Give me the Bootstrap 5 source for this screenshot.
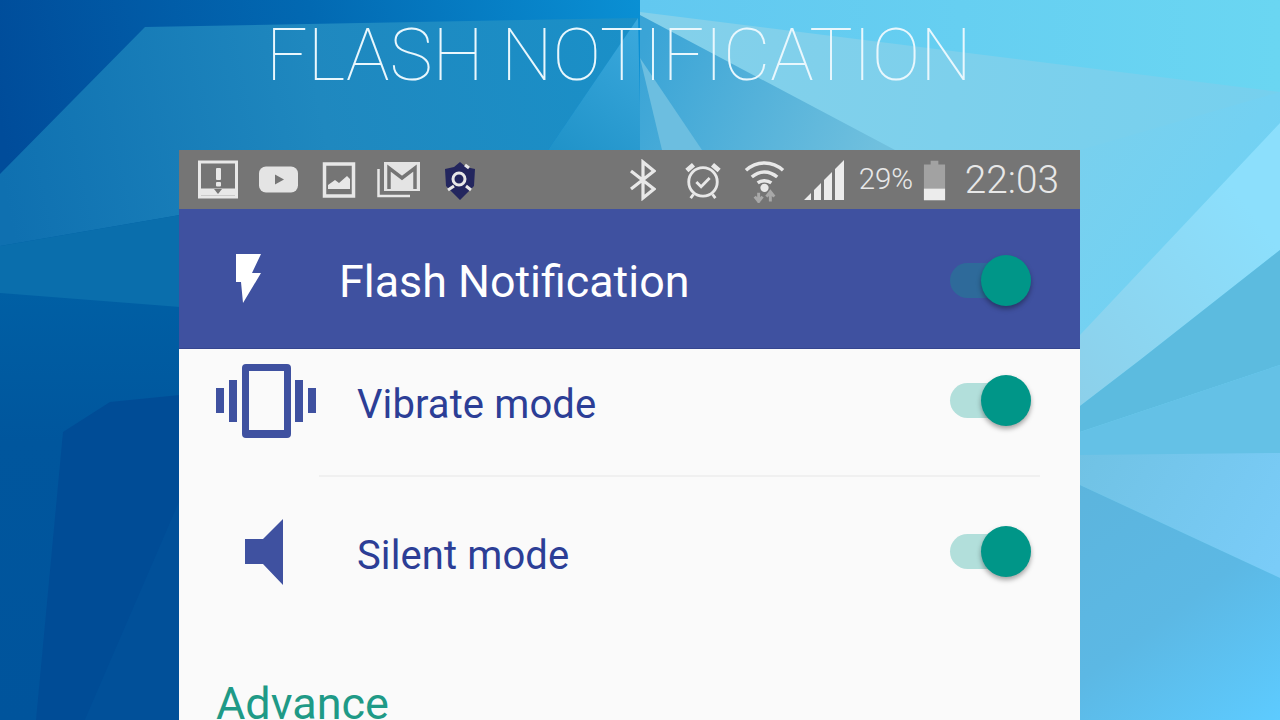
<!DOCTYPE html>
<html lang="en"><head><meta charset="utf-8"><title>Flash Notification</title>
<link href="https://cdn.jsdelivr.net/npm/bootstrap@5.3.0/dist/css/bootstrap.min.css" rel="stylesheet">
<style>
html,body{height:720px;overflow:hidden;background:#0a6fb0}
.stage{width:1280px;height:720px;overflow:hidden;font-family:Roboto,"Liberation Sans",sans-serif}
.wall{inset:0;z-index:0}
.front{z-index:1;height:720px}
.promo{margin:0;padding-left:266px;height:150px;padding-top:11px;font-size:72.8px;line-height:88px;font-weight:100;color:#e9f7fd;white-space:nowrap}
.phone{margin-left:179px;width:901px;height:570px;background:#fafafa;overflow:hidden}
.sbar{height:59px;background:#757575;color:#e8e8e8;padding-left:19px;padding-right:21px}
.apphead{height:140px;background:#3f51a0;color:#fff;padding-right:49px;box-shadow:inset 0 -1px 0 #35458f}
.headglyph{width:160px;padding-left:57px;height:50px;margin-top:-1px}
.headtitle{font-size:44.8px;font-weight:400;line-height:1;margin:6px 0 0}
.rowa{height:126px;padding:14px 49px 37px 36px}
.rowb{height:149px;padding:0 49px 0 36px}
.leadglyph{width:142px;flex:none}
.spk{padding-left:30px}
.rowlabel{font-size:40px;line-height:1;letter-spacing:.1px;color:#2c3e96;margin-top:8px}
.sep{height:2px;background:#f0f0f0;margin-left:140px;margin-right:40px}
.advance{font-size:45px;line-height:1;color:#1f9a87;padding-left:37px;padding-top:55px}
.tog{width:81px;height:51px;flex:none}
.tog-up{margin-top:3px}
.tog-track{left:0;top:8px;width:62px;height:35px;border-radius:18px;background:#b2dfdb}
.tog-track.dim{background:#2e6a9a}
.tog-thumb{right:0;top:0;width:50px;height:51px;border-radius:50%;background:#009688;box-shadow:0 3px 5px rgba(0,0,0,.35)}
.pct{font-size:29.500px;font-weight:300;line-height:1;margin-left:14px;letter-spacing:-.2px}
.clock{font-size:38.800px;font-weight:300;line-height:1;margin-left:18px;margin-top:2px}
.m-alarm{margin-left:28px}.m-wifi{margin-left:22px}.m-sig{margin-left:19px}.m-batt{margin-left:9px}
svg{display:block}
</style></head>
<body class="m-0">
<div class="stage position-relative">
<svg class="wall position-absolute" width="1280" height="720" viewBox="0 0 1280 720" aria-hidden="true">
<defs>
<linearGradient id="g0" x1="0" y1="293" x2="0" y2="720" gradientUnits="userSpaceOnUse"><stop offset="0" stop-color="#005fa4"/><stop offset=".35" stop-color="#00569d"/><stop offset="1" stop-color="#00549c"/></linearGradient>
<linearGradient id="g1" x1="0" y1="170" x2="640" y2="40" gradientUnits="userSpaceOnUse"><stop offset="0" stop-color="#0f70b0"/><stop offset=".5" stop-color="#1f88bf"/><stop offset="1" stop-color="#1a90c8"/></linearGradient>
<linearGradient id="g2" x1="0" y1="120" x2="640" y2="0" gradientUnits="userSpaceOnUse"><stop offset="0" stop-color="#004c9a"/><stop offset=".5" stop-color="#0269b2"/><stop offset="1" stop-color="#0a90d4"/></linearGradient>
<linearGradient id="g3" x1="640" y1="0" x2="1280" y2="0" gradientUnits="userSpaceOnUse"><stop offset="0" stop-color="#62c8f0"/><stop offset="1" stop-color="#6ad6f2"/></linearGradient>
<linearGradient id="g4" x1="1080" y1="450" x2="1280" y2="720" gradientUnits="userSpaceOnUse"><stop offset="0" stop-color="#5cb4dc"/><stop offset=".55" stop-color="#5cb8e4"/><stop offset="1" stop-color="#5dcbff"/></linearGradient>
<linearGradient id="g5" x1="640" y1="50" x2="880" y2="150" gradientUnits="userSpaceOnUse"><stop offset="0" stop-color="#3aa4d6"/><stop offset="1" stop-color="#70c0de"/></linearGradient>
<linearGradient id="g6" x1="1080" y1="150" x2="1280" y2="300" gradientUnits="userSpaceOnUse"><stop offset="0" stop-color="#78d0ee"/><stop offset="1" stop-color="#6ed2f6"/></linearGradient>
<linearGradient id="g7" x1="1080" y1="400" x2="1280" y2="250" gradientUnits="userSpaceOnUse"><stop offset="0" stop-color="#8cd0ea"/><stop offset="1" stop-color="#8cdffc"/></linearGradient>
<linearGradient id="g8" x1="548" y1="150" x2="640" y2="30" gradientUnits="userSpaceOnUse"><stop offset="0" stop-color="#1f92c8"/><stop offset="1" stop-color="#3aa8dc"/></linearGradient>
<linearGradient id="g9" x1="1080" y1="450" x2="1280" y2="560" gradientUnits="userSpaceOnUse"><stop offset="0" stop-color="#70c2e4"/><stop offset="1" stop-color="#7accf8"/></linearGradient>
<linearGradient id="g10" x1="640" y1="0" x2="1280" y2="100" gradientUnits="userSpaceOnUse"><stop offset="0" stop-color="#84d0ea"/><stop offset="1" stop-color="#76d0ee"/></linearGradient>
</defs>
<rect width="640" height="720" fill="url(#g0)"/>
<rect x="640" width="640" height="720" fill="#72d2f2"/>
<rect width="641" height="175" fill="url(#g2)"/>
<polygon points="0,174 145,27 638,18 548,150 180,150 180,215 0,246" fill="url(#g1)"/>
<polygon points="0,246 180,215 180,307 0,293" fill="#0a6eac"/>
<polygon points="63,432 110,402 180,395 180,500 85,720 36,720" fill="#004c96"/>
<polygon points="85,720 180,500 180,720" fill="#015099"/>
<polygon points="638,18 641,150 548,150" fill="url(#g8)"/>
<rect x="640" width="640" height="150" fill="url(#g10)"/>
<polygon points="640,0 1280,0 1280,92 640,12" fill="url(#g3)"/>
<polygon points="640,15 895,150 640,150" fill="url(#g5)"/>
<polygon points="640,58 702,150 662,150" fill="#6cbee0"/>
<polygon points="1080,150 1280,92 1280,380 1080,380" fill="url(#g6)"/>
<polygon points="1080,335 1280,123 1280,250 1140,360 1080,406" fill="url(#g7)"/>
<polygon points="1080,406 1140,360 1280,250 1280,365 1080,432" fill="#5cbbdf"/>
<polygon points="1080,432 1280,365 1280,455 1080,455" fill="#64c1e6"/>
<polygon points="1080,455 1280,453 1280,578 1080,485" fill="url(#g9)"/>
<polygon points="1080,485 1280,578 1280,720 1080,720" fill="url(#g4)"/>
</svg>

<div class="front position-relative">
<h1 class="promo">FLASH NOTIFICATION</h1>
<div class="phone">
 <div class="sbar d-flex align-items-center">
  <svg width="280" height="42" viewBox="0 0 280 42" fill="none" stroke="#e8e8e8">
   <path d="M1.500 3h37v35h-37z" stroke-width="3"/><path d="M2 33h36" stroke-width="7"/><path d="M16 30l4 5 4-5z" fill="#757575" stroke="none"/>
   <rect x="18" y="9" width="5" height="12" rx="1" fill="#e8e8e8" stroke="none"/><rect x="18" y="23" width="5" height="4.500" rx="1" fill="#e8e8e8" stroke="none"/>
   <rect x="61" y="7.500" width="39" height="26" rx="7" fill="#e4e4e4" stroke="none"/><path d="M77 15.500v10l9-5z" fill="#757575" stroke="none"/>
   <rect x="126.500" y="5" width="29" height="32" stroke-width="3.500"/><path d="M130 30v-4l7-5 4 3 8-7 3 3v10z" fill="#e8e8e8" stroke="none"/>
   <path d="M180.500 10v27H212" stroke-width="2.500"/><rect x="186" y="3" width="36" height="29" fill="#e4e4e4" stroke="none"/><path d="M191 30V9l13 10 13-10v21" stroke="#757575" stroke-width="3.500"/>
   <path d="M262 3l6 5 9 2-1 17-14 14-14-14-1-17 9-2z" fill="#23265e" stroke="none"/><circle cx="261" cy="20" r="6" stroke="#e8e8e8" stroke-width="3"/><path d="M250 31l6-4M273 31l-5-4M267 6l4 3" stroke="#e8e8e8" stroke-width="3"/>
  </svg>
  <div class="ms-auto d-flex align-items-center">
   <svg width="27" height="42" viewBox="0 0 27 42" fill="none" stroke="#e8e8e8" stroke-width="3.200"><path d="M2 12l23 18-11 9V3l11 9L2 30"/></svg>
   <svg class="m-alarm" width="38" height="42" viewBox="0 0 40 42" fill="none" stroke="#e8e8e8"><circle cx="20" cy="23" r="15" stroke-width="3"/><path d="M13 23l5 5 9-9" stroke-width="3"/><path d="M3 11l7-6M37 11l-7-6" stroke-width="5"/><path d="M10 36l-3 4M30 36l3 4" stroke-width="3"/></svg>
   <svg class="m-wifi" width="41" height="46" viewBox="0 0 42 46" fill="none" stroke="#e8e8e8" stroke-width="3.500"><path d="M2 13c11-10 27-10 38 0M8 20c8-7 18-7 26 0M14 26c4-3 10-3 14 0"/><circle cx="21" cy="31" r="2.500" fill="#e8e8e8"/><path d="M15 36v10M11 40l4 5 4-5M27 45V35M23 40l4-5 4 5" stroke="#a8a8a8" stroke-width="3"/></svg>
   <svg class="m-sig" width="41" height="42" viewBox="0 0 41 42" fill="#ececec"><path d="M0 41l7-7v7zM10 31l7-7v17h-7zM20 21l8-8v28h-8zM31 10l9-9v40h-9z"/></svg>
   <span class="pct">29%</span>
   <svg class="m-batt" width="25" height="42" viewBox="0 0 26 42"><path d="M9 1h8v4h7v37H2V5h7z" fill="#a2a2a2"/><rect x="2" y="30" width="22" height="12" fill="#ececec"/></svg>
   <span class="clock">22:03</span>
  </div>
 </div>
 <div class="apphead d-flex align-items-center">
  <div class="headglyph d-flex align-items-center"><svg width="26" height="50" viewBox="0 0 26 50" fill="#fff"><path d="M0 0H25L16 19H25L7 49L5 28H0Z"/></svg></div>
  <p class="headtitle">Flash Notification</p>
  <div class="tog tog-up position-relative ms-auto"><div class="tog-track dim position-absolute"></div><div class="tog-thumb position-absolute"></div></div>
 </div>
 <div class="rowa d-flex align-items-center">
  <div class="leadglyph"><svg width="102" height="74" viewBox="0 0 102 74" fill="#3f51a0"><path fill-rule="evenodd" d="M31 0h41a4 4 0 0 1 4 4v66a4 4 0 0 1-4 4H31a4 4 0 0 1-4-4V4a4 4 0 0 1 4-4zm3 7v59h35V7z"/><rect x="1" y="24" width="8" height="25"/><rect x="14" y="16" width="8" height="42"/><rect x="80" y="16" width="8" height="42"/><rect x="93" y="24" width="8" height="25"/></svg></div>
  <span class="rowlabel">Vibrate mode</span>
  <div class="tog position-relative ms-auto"><div class="tog-track position-absolute"></div><div class="tog-thumb position-absolute"></div></div>
 </div>
 <div class="sep"></div>
 <div class="rowb d-flex align-items-center">
  <div class="leadglyph spk"><svg width="38" height="66" viewBox="0 0 38 66" fill="#3f51a0"><path d="M0 20H18L38 0V66L18 45H0Z"/></svg></div>
  <span class="rowlabel">Silent mode</span>
  <div class="tog position-relative ms-auto"><div class="tog-track position-absolute"></div><div class="tog-thumb position-absolute"></div></div>
 </div>
 <div class="advance">Advance</div>
</div>
</div>
</div>
<script src="https://cdn.jsdelivr.net/npm/bootstrap@5.3.0/dist/js/bootstrap.bundle.min.js"></script>
</body></html>
